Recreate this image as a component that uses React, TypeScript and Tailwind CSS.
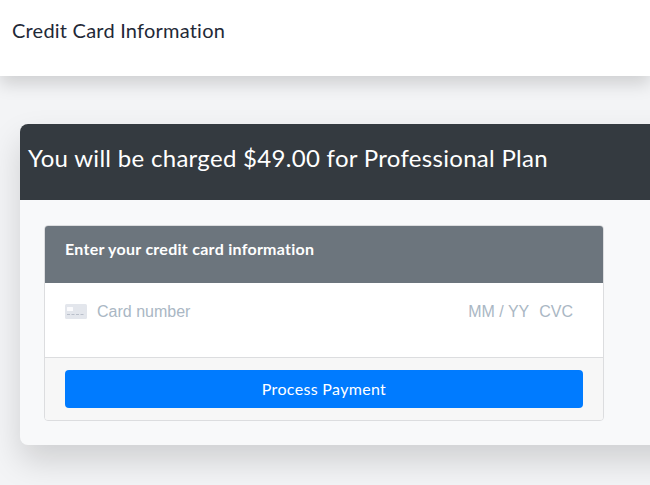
function CardIcon() {
  return (
    <svg width="22" height="15" viewBox="0 0 22 15" className="shrink-0">
      <rect width="22" height="15" rx="1.5" fill="#e3e6ec" />
      <rect x="2" y="3" width="6" height="4" rx="0.5" fill="#fbfbfd" />
      <path d="M2 10.500h3M6.500 10.500h3M11 10.500h3M15.500 10.500h3" stroke="#b9bfca" strokeWidth="1" />
    </svg>
  );
}

export default function App() {
  return (
    <div className="h-[485px] w-[650px] overflow-hidden bg-[#f3f4f6] font-['Lato',sans-serif]">
      <header className="relative z-10 flex h-[76px] items-center bg-white pb-4 pl-3 shadow-[0_8px_16px_rgba(0,0,0,0.15)]">
        <h1 className="text-[20px] leading-6 tracking-[0.22px] text-[#1f2937]">Credit Card Information</h1>
      </header>

      <main className="pl-5 pt-12">
        <section className="w-[700px] rounded-lg bg-[#f8f9fa] shadow-[0_16px_32px_rgba(0,0,0,0.15)]">
          <div className="flex h-[76px] items-center rounded-t-lg bg-[#343a40] pb-2 pl-2">
            <h2 className="text-[24px] leading-8 tracking-[0.3px] text-white">You will be charged $49.00 for Professional Plan</h2>
          </div>

          <div className="pb-6 pl-6 pt-[25px]">
            <div className="w-[560px] overflow-hidden rounded border border-[#dcdddf]">
              <div className="flex h-[57px] items-start bg-[#6c757d] pl-5 pt-[13px]">
                <h3 className="text-[16px] font-bold leading-5 tracking-[0.27px] text-white">Enter your credit card information</h3>
              </div>
              <div className="flex h-[75px] items-start justify-between border-b border-[#dcdddf] bg-white pl-5 pr-[30px] pt-[19px] font-['Liberation_Sans',Arial,sans-serif] text-[16px] leading-[19px] text-[#aab7c4]">
                <div className="flex items-center gap-[10px]">
                  <CardIcon />
                  <span>Card number</span>
                </div>
                <div className="flex gap-[10px]">
                  <span>MM / YY</span>
                  <span>CVC</span>
                </div>
              </div>
              <div className="bg-[#f7f7f7] px-5 pb-3 pt-3">
                <button className="h-[38px] w-full rounded bg-[#007bff] text-center text-[16px] tracking-[0.33px] text-white">
                  Process Payment
                </button>
              </div>
            </div>
          </div>
        </section>
      </main>
    </div>
  );
}
